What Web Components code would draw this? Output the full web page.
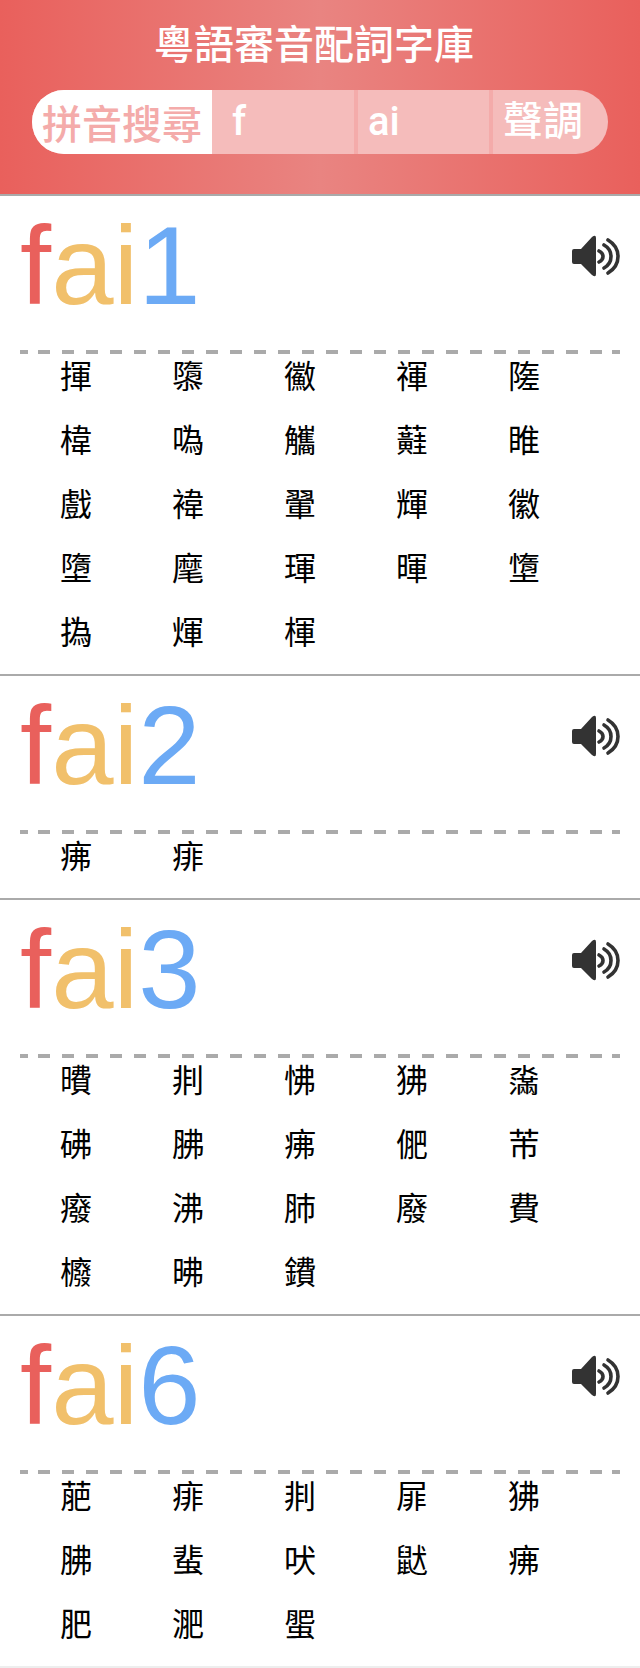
<!DOCTYPE html>
<html lang="zh-Hant"><head><meta charset="utf-8"><title>粵語審音配詞字庫</title>
<style>body{margin:0;background:#fff}</style></head><body>
<cantonese-app></cantonese-app>
<script>
class SearchHeader extends HTMLElement{
  constructor(){super();this.attachShadow({mode:"open"}).innerHTML=`
<style>
:host{display:block;background:linear-gradient(90deg,#e9605c,#e98481 50%,#e9605c);color:#fff;padding:24px 32px 40px;border-bottom:2px solid #aaa;font-family:Roboto,"Noto Sans CJK TC",sans-serif;font-weight:500}
h1{margin:0 0 22px;padding-right:12px;font-size:40px;line-height:44px;font-weight:500;text-align:center}
form{display:grid;grid-template-columns:180px 146fr 135fr 115fr;height:64px;border-radius:32px;overflow:hidden;background:#f5bcbb}
label{padding-left:10px;background:#fff;color:#f4abaa;font-size:40px;line-height:72px;white-space:nowrap}
input,select{box-sizing:border-box;width:100%;height:64px;min-width:0;margin:0;border:0;border-radius:0;padding:0 0 2px 10px;background:none;appearance:none;outline:0;font:inherit;font-size:40px;color:#fff}
input{border-right:4px solid #f4abaa}
#initial{padding-left:20px}
</style>
<h1>粵語審音配詞字庫</h1>
<form><label for="initial">拼音搜尋</label><input id="initial" value="f"><input aria-label="韻母" value="ai"><select aria-label="聲調"><option>聲調</option></select></form>`}
}
class PlayButton extends HTMLElement{
  constructor(){super();this.attachShadow({mode:"open"}).innerHTML=`
<style>:host{display:block}button{display:block;border:0;padding:0;background:none}svg{display:block}</style>
<button aria-label="播放發音"><svg width="48" height="42" viewBox="0 0 48 42"><path fill="#333" d="M2 14H9L20 2Q24-1 24 3V39Q24 43 20 40L9 29H2Q0 29 0 27V16Q0 14 2 14Z"/><g fill="none" stroke="#333" stroke-width="3.6" stroke-linecap="round"><path d="M27 16Q31 18 31 21.500T27 27"/><path d="M32 10Q39 14 39 21.500T32 33"/><path d="M36 5Q46 11 46 21.500T36 38"/></g></svg></button>`}
}
class SyllableCard extends HTMLElement{
  constructor(){super();this.attachShadow({mode:"open"}).innerHTML=`
<style>
:host{display:block;background:#fff;border-bottom:2px solid #aaa}
:host(:last-of-type){border-color:#eee}
header{display:flex;justify-content:space-between;align-items:flex-start;margin:0 20px;height:158px;
  background:linear-gradient(#aaa,#aaa) 0 100%/8px 4px no-repeat,linear-gradient(#aaa,#aaa) 100% 100%/8px 4px no-repeat,linear-gradient(90deg,#aaa 12px,transparent 12px) -6px 100%/24px 4px repeat-x}
h2{margin:0;font-family:Helvetica,"Liberation Sans",sans-serif;font-size:112px;line-height:140px;font-weight:400;display:flex}
play-button{margin-top:39px}
.i{color:#e9605c}.f{color:#f1c06b}.t{color:#6caaf5}
ul{list-style:none;margin:0 20px;padding:0;display:grid;grid-template-columns:repeat(5,112px);grid-auto-rows:64px;text-align:center;font-size:32px;line-height:46px}
</style>
<header><h2><span class="i"></span><span class="f"></span><span class="t"></span></h2><play-button></play-button></header><ul></ul>`}
  connectedCallback(){
    const r=this.shadowRoot;
    r.querySelector(".i").textContent=this.getAttribute("initial");
    r.querySelector(".f").textContent=this.getAttribute("final");
    r.querySelector(".t").textContent=this.getAttribute("tone");
    r.querySelector("ul").innerHTML=[...this.getAttribute("chars")].map(c=>`<li>${c}</li>`).join("");
  }
}
class CantoneseApp extends HTMLElement{
  constructor(){super();this.attachShadow({mode:"open"}).innerHTML=`
<style>:host{display:block;font-family:"Liberation Sans","Noto Sans CJK TC",sans-serif;color:#000}</style>
<search-header></search-header>
<main>
<syllable-card initial="f" final="ai" tone="1" chars="揮隳鰴禈隓椲噅觿蘳睢戲褘翬輝徽墮麾琿暉墯撝煇楎"></syllable-card>
<syllable-card initial="f" final="ai" tone="2" chars="疿痱"></syllable-card>
<syllable-card initial="f" final="ai" tone="3" chars="曊剕怫狒濷砩胇疿俷芾癈沸肺廢費櫠昲鐨"></syllable-card>
<syllable-card initial="f" final="ai" tone="6" chars="萉痱剕屝狒胇蜚吠鼣疿肥淝蜰"></syllable-card>
</main>`}
}
customElements.define("search-header",SearchHeader);
customElements.define("play-button",PlayButton);
customElements.define("syllable-card",SyllableCard);
customElements.define("cantonese-app",CantoneseApp);
</script></body></html>
